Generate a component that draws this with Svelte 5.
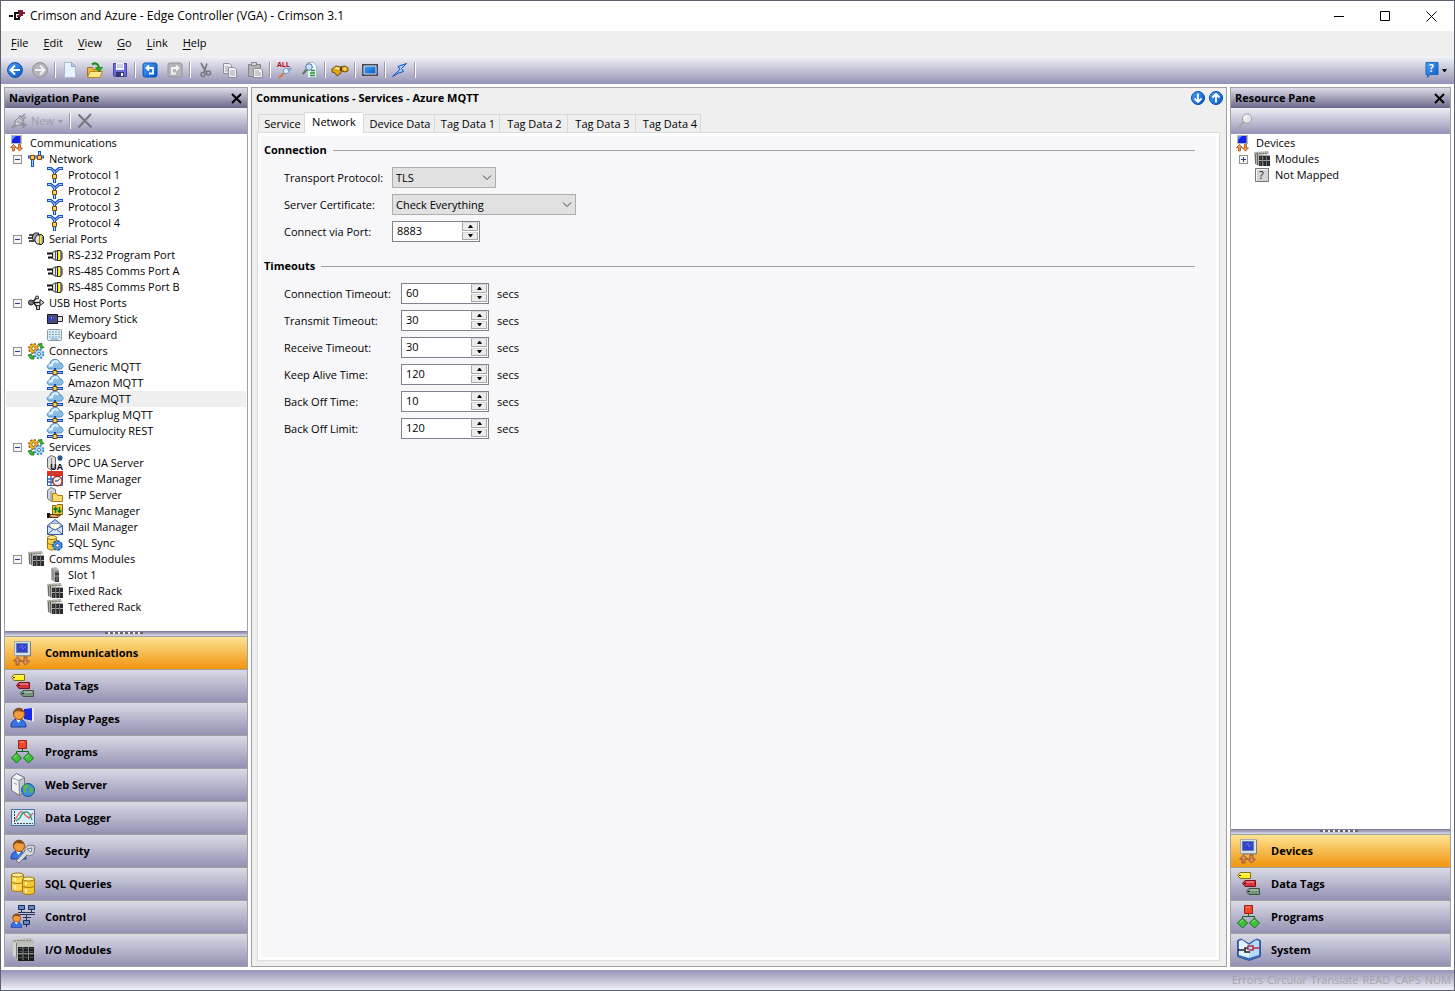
<script lang="ts">
  const menus = ["File", "Edit", "View", "Go", "Link", "Help"];

  // null draws a separator
  const tools = [
    ["back", "Back"], ["forward", "Forward"], null,
    ["new", "New"], ["open", "Open"], ["save", "Save"], null,
    ["undo", "Undo"], ["redo", "Redo"], null,
    ["cut", "Cut"], ["copy", "Copy"], ["paste", "Paste"], null,
    ["findall", "Find All"], ["find", "Find"], null,
    ["binoculars", "Search"], null,
    ["screen", "Screen"], null,
    ["bolt", "Download"], null,
  ];

  let navTree = $state([
    { label: "Network", icon: "network", open: true, items: [
      { label: "Protocol 1", icon: "protocol" },
      { label: "Protocol 2", icon: "protocol" },
      { label: "Protocol 3", icon: "protocol" },
      { label: "Protocol 4", icon: "protocol" },
    ] },
    { label: "Serial Ports", icon: "serials", open: true, items: [
      { label: "RS-232 Program Port", icon: "serial" },
      { label: "RS-485 Comms Port A", icon: "serial" },
      { label: "RS-485 Comms Port B", icon: "serial" },
    ] },
    { label: "USB Host Ports", icon: "usb", open: true, items: [
      { label: "Memory Stick", icon: "stick" },
      { label: "Keyboard", icon: "keyboard" },
    ] },
    { label: "Connectors", icon: "gears", open: true, items: [
      { label: "Generic MQTT", icon: "cloud" },
      { label: "Amazon MQTT", icon: "cloud" },
      { label: "Azure MQTT", icon: "cloud" },
      { label: "Sparkplug MQTT", icon: "cloud" },
      { label: "Cumulocity REST", icon: "cloud" },
    ] },
    { label: "Services", icon: "gears", open: true, items: [
      { label: "OPC UA Server", icon: "opc" },
      { label: "Time Manager", icon: "time" },
      { label: "FTP Server", icon: "ftp" },
      { label: "Sync Manager", icon: "sync" },
      { label: "Mail Manager", icon: "mail" },
      { label: "SQL Sync", icon: "sqlsync" },
    ] },
    { label: "Comms Modules", icon: "rack", open: true, items: [
      { label: "Slot 1", icon: "slot" },
      { label: "Fixed Rack", icon: "rack" },
      { label: "Tethered Rack", icon: "rack" },
    ] },
  ]);

  let resourceTree = $state([
    { label: "Modules", icon: "rack", open: false, items: [] },
    { label: "Not Mapped", icon: "unmapped" },
  ]);

  const navSections = [
    ["comms", "Communications"], ["tags", "Data Tags"], ["display", "Display Pages"],
    ["programs", "Programs"], ["web", "Web Server"], ["logger", "Data Logger"],
    ["security", "Security"], ["sql", "SQL Queries"], ["control", "Control"], ["io", "I/O Modules"],
  ];
  const resourceSections = [
    ["comms", "Devices"], ["tags", "Data Tags"], ["programs", "Programs"], ["system", "System"],
  ];

  const tabs = ["Service", "Network", "Device Data", "Tag Data 1", "Tag Data 2", "Tag Data 3", "Tag Data 4"];

  let timeouts = $state([
    { id: "connection", label: "Connection Timeout:", value: 60 },
    { id: "transmit", label: "Transmit Timeout:", value: 30 },
    { id: "receive", label: "Receive Timeout:", value: 30 },
    { id: "keepalive", label: "Keep Alive Time:", value: 120 },
    { id: "backoff", label: "Back Off Time:", value: 10 },
    { id: "backofflimit", label: "Back Off Limit:", value: 120 },
  ]);

  const flags = ["Errors", "Circular", "Translate", "READ", "CAPS", "NUM"];

  let selected = $state("Azure MQTT");
  let tab = $state("Network");
  let navSection = $state("Communications");
  let resourceSection = $state("Devices");
  let port = $state({ id: "port", value: 8883 });

  /* 16px artwork */
  const small: Record<string, string> = {
    app: `<path d="M0 8h4M10 5H6v6h4V9" stroke="#111" stroke-width="2" fill="none"/><path d="M8 8h3V4M9 3h4v5M12 5h4" stroke="#7c1c36" stroke-width="2" fill="none"/>`,
    back: `<circle cx="8" cy="8" r="7.4" fill="url(#blue)" stroke="#0b4da8"/><path d="M13 8H4M8 3.5 3.6 8 8 12.5" stroke="#fff" stroke-width="2" fill="none"/>`,
    forward: `<circle cx="8" cy="8" r="7.4" fill="#b5b5ba" stroke="#8e8e92"/><path d="M3 8h9M8 3.5 12.4 8 8 12.5" stroke="#f1f1f3" stroke-width="2" fill="none"/>`,
    new: `<path d="M2.5.5h7l4 4v11h-11z" fill="#e9f3fd" stroke="#a9bbd3"/><path d="M9.5.5v4h4z" fill="#b9d2ef" stroke="#8fa9cc"/>`,
    open: `<path d="M.5 14.5v-9h5l1 2h7v2" fill="#e9b93f" stroke="#a8771b"/><path d="M.5 15.5 3 9.5h12.500l-2.500 6z" fill="#ffe58c" stroke="#b7861f"/><path d="M5 2.500c4-2.500 7 0 7 4" stroke="#159015" stroke-width="2.2" fill="none"/><path d="M8.500 5.500h7L12 10z" fill="#26b226" stroke="#107010" stroke-width=".6"/>`,
    save: `<path d="M1.5 1.5h13v13h-12l-1-1z" fill="#6c6cd8" stroke="#4444a4"/><path d="M4 1h8v7H4z" fill="#f4f4ff"/><path d="M5 3h6M5 5h6" stroke="#a8a8c8"/><path d="M4 10h8v5H4z" fill="#35357c"/><path d="M9 11h2v3H9z" fill="#fff"/>`,
    undo: `<rect x="1" y="1" width="14" height="14" rx="2" fill="url(#blue)" stroke="#0b55bd"/><path d="M5 6h6v5.500H7M7 3.5 4.500 6 7 8.500" stroke="#fff" stroke-width="1.8" fill="none"/>`,
    redo: `<rect x="1" y="1" width="14" height="14" rx="2" fill="#b4b4b8" stroke="#949498"/><path d="M11 6H5v5.500h4M9 3.5 11.500 6 9 8.500" stroke="#f3f3f5" stroke-width="1.8" fill="none"/>`,
    cut: `<path d="M4 1l5 9M10 1.5 7 10" stroke="#77777f" stroke-width="1.6"/><circle cx="6" cy="12.500" r="2" fill="none" stroke="#77777f" stroke-width="1.5"/><circle cx="11.500" cy="11" r="2" fill="none" stroke="#77777f" stroke-width="1.5"/>`,
    copy: `<path d="M1.5 1.5h6l2 2v8h-8z" fill="#ececf0" stroke="#8f8f96"/><path d="M3 5h4M3 7h4M3 9h4" stroke="#a4a4aa"/><path d="M6.5 5.5h6l2 2v8h-8z" fill="#f2f2f5" stroke="#8f8f96"/><path d="M8 9h5M8 11h5M8 13h5" stroke="#a4a4aa"/>`,
    paste: `<path d="M1.5 2.5h12v12h-12z" fill="#b3b3b7" stroke="#85858b"/><path d="M4.5.5h5v3h-5z" fill="#d7d7da" stroke="#85858b"/><path d="M6.5 6.5h7l2 2v7h-9z" fill="#f1f1f4" stroke="#8f8f96"/><path d="M8 9h4M8 11h6M8 13h6" stroke="#a4a4aa"/>`,
    findall: `<text x="0" y="5" font-size="7" font-weight="700" fill="#b00d1b">ALL</text><path d="m7 11-5 5" stroke="#d17a32" stroke-width="2"/><circle cx="9" cy="9" r="2.700" fill="#dbeeff" stroke="#6f9fce"/><path d="M13 5v4M11 7h4" stroke="#6f9fce"/>`,
    find: `<path d="M5.5.5h6l3 3v12h-9z" fill="#f1f7ff" stroke="#a9b9ca"/><path d="M9 8.500h4M8 11h5M8 13.500h5" stroke="#159b22" stroke-width="1.5"/><path d="M5 7 .8 12" stroke="#4b7e4d" stroke-width="2"/><circle cx="7" cy="5" r="3.300" fill="#c7e3fb" stroke="#4e77a7"/>`,
    binoculars: `<path d="m0 7 4-3 4 1 5-1 3 2v3l-3 1-3-1-2 3-3 2-2-3-3-1z" fill="#dba21a" stroke="#76500d"/><path d="m2 6 3-1 3 1-2 2z" fill="#ffe47e"/><path d="M8 5h2v4H8z" fill="#5b4312"/><circle cx="13" cy="7" r="1.700" fill="#ffd557"/>`,
    screen: `<path d="M0 2h16v12H0z" fill="#4b4b50"/><path d="M2 4h12v8H2z" fill="url(#blue)" stroke="#d4dff2"/>`,
    bolt: `<path d="M14.5 1.5 6 4.500l2 3-7.500 7 6-3.500 5-1.500-2-3z" fill="#a9d4ff" stroke="#0b4fc0"/>`,
    help: `<path d="M2 .5h12v12H6l-2.500 3v-3H2z" fill="url(#blue)" stroke="#2067b5"/><text x="5" y="10" font-size="10" font-weight="700" fill="#fff">?</text>`,
    down: `<circle cx="8" cy="8" r="6.500" fill="url(#blue)" stroke="#0947a8"/><path d="M8 3.500V12M4.500 8.500 8 12l3.500-3.500" stroke="#fff" stroke-width="1.8" fill="none"/>`,
    up: `<circle cx="8" cy="8" r="6.500" fill="url(#blue)" stroke="#0947a8"/><path d="M8 12.500V4M4.500 7.500 8 4l3.500 3.500" stroke="#fff" stroke-width="1.8" fill="none"/>`,
    plug: `<path d="m1 15 4-4" stroke="#8e8e97" stroke-width="2"/><path d="m3 9 3-1 3-5 2 1 3-3M12 6l3-2" stroke="#8e8e97" stroke-width="1.5" fill="none"/><path d="m4 8 5-5 4 4-4 5-5 1z" fill="#c9c9cf" stroke="#8e8e97"/><path d="m6 8 4 2M8 5l4 3" stroke="#8e8e97"/><path d="M12.500 9v6M9.500 12h6" stroke="#8e8e97" stroke-width="2"/>`,
    remove: `<path d="m1.500 1.500 13 13M14 1 1.500 14.500" stroke="#77777f" stroke-width="2"/>`,
    lens: `<path d="M7 9 1 15.500" stroke="#a6a6a6" stroke-width="2.2"/><circle cx="10" cy="5.500" r="4.700" fill="#e6e6e8" stroke="#a2a2a2"/><path d="M7.500 6a3 3 0 0 1 3-3" stroke="#fff" fill="none"/>`,
    comms: `<path d="M2 0h11v9H2z" fill="#b6bac3"/><path d="M3 1h8v7H3z" fill="#1522e0"/><path d="M3 1h4L3 5z" fill="#6c93ff"/><path d="M11.500 1v8" stroke="#777c88"/><path d="m4.500 9.500 3 3h-2V16h-2v-3.500h-2zM9.500 9.500h2V13h2l-3 3-3-3h2z" fill="#efa055" stroke="#a14e12" stroke-width=".8"/>`,
    network: `<path d="M0 6h16" stroke="#1653c2" stroke-width="3"/><path d="M1 6h14" stroke="#a9ccfa"/><path d="M4.500 6v10M11.500 0v6" stroke="#1653c2" stroke-width="3"/><path d="M4.500 9v6M11.500 1v3" stroke="#a9ccfa"/><path d="M2.5 4.500h4v4h-4zM9.500 4.500h4v4h-4z" fill="#ffc64a" stroke="#7c4a08"/>`,
    protocol: `<path d="M0 1.500h4L8 5l4-3.500h4" stroke="#1653c2" stroke-width="3" fill="none"/><path d="M1 1.500h3L8 5.500l4-4h3" stroke="#b7d8ff" fill="none"/><path d="M7.500 5v11" stroke="#1653c2" stroke-width="3"/><path d="M7.500 5v10.500" stroke="#b7d8ff"/><path d="M5.500 7.500h4v4h-4z" fill="#ffd06a" stroke="#7c4a08"/>`,
    serials: `<path d="M1 4h5M0 7h5M1 10h5" stroke="#111" stroke-width="1.6"/><path d="m4.500 5 2-3h4v9h-3l-3-3z" fill="#a9a9a9" stroke="#222"/><path d="m7 7 2-3h4v9H9l-2-3z" fill="#e2e2e2" stroke="#222"/><path d="M11.500 3.500h2l2 2v6l-2 2h-2z" fill="#8f8f96" stroke="#222"/><path d="M12.500 4.500v8" stroke="#ffee2a" stroke-width="2"/>`,
    serial: `<path d="M0 6.500h6M1 10.500h5" stroke="#111" stroke-width="2"/><path d="m5.500 6 2-2h3v9h-3l-2-2z" fill="#e2e2e2" stroke="#222"/><path d="M8.500 4v9" stroke="#555"/><path d="M10.500 3.500h3l1.500 2v6l-1.500 2h-3z" fill="#8f8f96" stroke="#222"/><path d="M12 4v9" stroke="#ffee2a" stroke-width="2"/>`,
    usb: `<path d="M3 7.500h10M5 7l3-4h3M6 8l3 4" stroke="#222" stroke-width="1.5" fill="none"/><circle cx="3" cy="7.500" r="2.500" fill="#777" stroke="#222"/><path d="m12 4.500 4 3-4 3z" fill="#ddd" stroke="#222"/><circle cx="9" cy="2.500" r="1.500" fill="#ccc" stroke="#222"/><path d="M8.500 10.500h3v4h-3z" fill="#ccc" stroke="#222"/>`,
    stick: `<path d="M.5 3.500h10v9H.5z" fill="#4c4c78" stroke="#15152c"/><circle cx="4" cy="8" r="2" fill="#1f36ff"/><path d="M4 7h1" stroke="#fff"/><path d="M10.500 5.500h5v5h-5z" fill="#e6e6e6" stroke="#222"/>`,
    keyboard: `<rect x=".5" y="2.500" width="14" height="11" rx="1" fill="#dfeaf1" stroke="#8d9aa4"/><path d="M2 5h11M2 7.500h11M2 10h11" stroke="#6aa4c7" stroke-dasharray="2 1"/><path d="M4 12h7" stroke="#6aa4c7"/>`,
    gears: `<circle cx="5.500" cy="5.500" r="4.500" fill="#e0a11c" stroke="#946208" stroke-width="2" stroke-dasharray="2 1.500"/><circle cx="5.500" cy="5.500" r="4" fill="#f0b62c"/><circle cx="5.500" cy="5.500" r="1.700" fill="#fff" stroke="#946208"/><circle cx="11" cy="11" r="4.200" fill="#9dd0f8" stroke="#3a7fc4" stroke-width="2" stroke-dasharray="2 1.300"/><circle cx="11" cy="11" r="3.600" fill="#acd9fb"/><circle cx="11" cy="11" r="1.500" fill="#fff" stroke="#3a7fc4"/><path d="m10 1 4-.5v2l2 2-3 1-1-2zM0 12l3-1 1 2h2v3H3z" fill="#46b839" stroke="#106b13" stroke-width=".8"/>`,
    cloud: `<path d="M2 10C-1 9 0 5 3 5c0-6 9-6 10-1 3.500 0 4 5 1 6z" fill="#86bce6" stroke="#5490c4"/><path d="M2 7c1-1 2-1 3-1 0-4 5-5 6-2" stroke="#d9eefd" stroke-width="2.5" fill="none"/><path d="M8 9v4" stroke="#234e8d" stroke-width="2"/><path d="M0 13.500h16" stroke="#174ba3" stroke-width="3"/><path d="M1 13.500h14" stroke="#8fbcf3"/><path d="M6 11.500h4v4H6z" fill="#ffd363" stroke="#6e4208"/>`,
    opc: `<path d="M.5 3 4.500.5l4 2v9l-4 4-4-3z" fill="#dcdcdc" stroke="#666"/><path d="M4.500 3v11" stroke="#888"/><path d="M13 0v6M10 3h6M11 1l4 4M15 1l-4 4" stroke="#184f8f" stroke-width="1.2"/><text x="3" y="15" font-size="9" font-weight="700" fill="#111">UA</text>`,
    time: `<path d="M.5 1.500h15v13H.5z" fill="#fff" stroke="#2759ad"/><path d="M0 0h16v5H0z" fill="#d73526"/><path d="M4 5v10M8 5v10M12 5v10M0 8h16M0 11h16" stroke="#2f63c4" stroke-width="1.3"/><circle cx="10.500" cy="10" r="4.700" fill="#f6f0ed" stroke="#a32b20" stroke-width="1.5"/><path d="M13 7.500 10.500 10H8" stroke="#222" fill="none"/>`,
    ftp: `<path d="M.5 3.500 4 .5l4.500 2v9l-4 3-4-3z" fill="#d4d7da" stroke="#6d737a"/><path d="M4 4v10" stroke="#8d9399"/><path d="M5.500 14.500v-8h4l1 2h5v6z" fill="#ffd967" stroke="#a9760e"/>`,
    sync: `<path d="M5.500 11.500v-9h4l1-1h5v10z" fill="#f6ca3e" stroke="#8b650b"/><path d="M8.500 10V4.500M6.500 6.500l2-2 2 2M12.500 4v5.500M10.500 7.500l2 2 2-2" stroke="#087c13" stroke-width="1.5" fill="none"/><path d="M0 10h3v5H0z" fill="#111"/><path d="M3 11.500h5l2 1 4-1-3 3H3z" fill="#e5ad6b" stroke="#5e3509"/>`,
    mail: `<path d="M.5 6.500 8 .5l7.500 6v9H.5z" fill="#b5cdf2" stroke="#365a9a"/><path d="M3 4.500h10v5l-5 3-5-3z" fill="#fffbe6" stroke="#8aa0c0"/><path d="m.5 7 7.500 4 7.500-4v8.500H.5z" fill="#d4e5fc" stroke="#365a9a"/><path d="m1 15 5-4.500M15 15l-5-4.500" stroke="#365a9a"/>`,
    sqlsync: `<path d="M.5 2.500v11c2 2 7 2 9 0v-11z" fill="#f6cf45" stroke="#9a6c09"/><ellipse cx="5" cy="2.500" rx="4.500" ry="2" fill="#fff09c" stroke="#9a6c09"/><path d="M.5 8c2 2 7 2 9 0" stroke="#9a6c09" fill="none"/><circle cx="10.500" cy="10.500" r="4.500" fill="#5d9ee0" stroke="#1654a3" stroke-width="1.5" stroke-dasharray="3 1"/><circle cx="10.500" cy="10.500" r="1.800" fill="#fff" stroke="#1654a3"/>`,
    rack: `<path d="m0 1 14-1 1 3-10 1v11l-4-2z" fill="#b3b3ae"/><path d="M1.500 3v10M3.500 3v11" stroke="#696966"/><path d="M2 2.500h12" stroke="#7b7b78" stroke-dasharray="2 1"/><path d="M5 4h11v11H5z" fill="#2b2b2d"/><path d="M5 4.500h11M5 9.500h11" stroke="#a8a8a5"/><path d="M6 7h9M6 12h9M6 14h9" stroke="#72726f" stroke-dasharray="1 2"/><path d="M8.500 4v11M12.500 4v11" stroke="#77777a"/>`,
    slot: `<path d="m4 1 5-1 3 3v12H8l-4-2z" fill="#b3b3ae"/><path d="M6 2v11" stroke="#777"/><path d="M8 4h4v11H8z" fill="#363638"/><path d="M8 5h4M8 9h4" stroke="#bbb"/><path d="M10 10v4" stroke="#8c8c88"/>`,
    unmapped: `<path d="M1.500 1.500h13v13h-13z" fill="#d4d4d4" stroke="#777"/><path d="M2.500 13.500v-11h11" stroke="#f7f7f7" fill="none"/><text x="5" y="12" font-size="11" fill="#111">?</text>`,
  };

  const person = `<path d="M0 20c0-5 2-8 7-8s8 3 8 8z" fill="#3b73e6" stroke="#173f9e"/><path d="m5 12 2.500 4L10 12z" fill="#fff"/><circle cx="8" cy="7" r="5.500" fill="#f49b3a" stroke="#9a4d0b"/><path d="M2 8C1 0 12-2 13 5 9 5 6 3 4 5z" fill="#85501c"/>`;

  /* 24px artwork */
  const large: Record<string, string> = {
    comms: `<path d="M3.500.5h16v14h-16z" fill="#dbe0e5" stroke="#a6aab2"/><path d="M5.500 2.500h11v9h-11z" fill="#3440ce" stroke="#5e83a1"/><path d="m8 7 3-3 1 4 3-3" stroke="#5a74f0" fill="none"/><path d="M19.500 1v14H5" stroke="#777b88" fill="none"/><path d="m6.500 16 4 4h-2.500v4H5v-4H2.500zM13 16h3v4h2.500l-4 4-4-4H13z" fill="#d58a5a" stroke="#8d4d27" stroke-width=".8"/>`,
    tags: `<path d="M3 .5h10.500v6H3l-2.500-3z" fill="#ffed25" stroke="#82700b"/><path d="M8 8.500h10.500v6H8l-2.500-3z" fill="#d5303b" stroke="#73131b"/><path d="M12 16.500h10.500v6H12l-2.500-3z" fill="#77947f" stroke="#3f5346"/><path d="M4 2h8M9 10h8M13 18h8" stroke="#fff" opacity=".6"/><path d="M2 3.500h2M7 11.500h2M11 19.500h2" stroke="#222"/>`,
    display: `<path d="m12.500 1.500 10-1v14l-10-2z" fill="#1b29e9" stroke="#d5d8e8"/><path d="M22 1v13" stroke="#eee" stroke-width="2"/>${person}`,
    programs: `<path d="M11.500 8v4M5.500 15v-3.500h12V15" stroke="#17651b" fill="none"/><path d="M7.500.5h8v8h-8z" fill="#f14829" stroke="#9f1f12"/><path d="M9 2h4" stroke="#ff9f86"/><path d="m5.500 13 5 5-5 5-5-5zM17.500 13l5 5-5 5-5-5z" fill="#3fc33b" stroke="#176d18"/><path d="m3 17.500 2.500-2.500M15 17.500l2.500-2.500" stroke="#a6f29b"/>`,
    web: `<path d="M.5 4.500 5.500.5l8 4v14l-5 4-8-5z" fill="#f0f1f3" stroke="#666c75"/><path d="M8 7.500 13.500 4.500v14l-5 4z" fill="#c4c8cf" stroke="#777d86"/><path d="m.5 4.500 8 3.500M3 10l3 1.500" stroke="#9aa0a8"/><circle cx="17" cy="17" r="6.500" fill="#3c8cd9" stroke="#17539a"/><path d="M12 13c3-3 6-2 6 1l-3 2 1 4-3-1zM19 14l4 2-2 5-3-3z" fill="#58b54a"/>`,
    logger: `<path d="M.5 3.500h23v16H.5z" fill="#d8edfb" stroke="#4a70a9"/><path d="M3.500 5v12.500H22" stroke="#444" fill="none" stroke-dasharray="2 1"/><path d="m4 14 5-8c2-1 4 0 5 3l4 3 4-5" stroke="#e2605f" stroke-width="1.3" fill="none"/><path d="m5 15 4-3c2-7 8-8 10-3l2 5" stroke="#2d9c68" stroke-width="1.3" fill="none"/>`,
    security: `${person}<path d="m5 22 9-10c-1-5 5-7 10-5l-1 7c-2 3-5 3-7 2l-8 8z" fill="#d4d7dc" stroke="#74777d"/><path d="m16 10 5-1-1 4z" fill="#f7f7f7" stroke="#74777d"/>`,
    sql: `<path d="M.5 3v15c2 2 10 2 12 0V3z" fill="#ffd850" stroke="#9d730b"/><ellipse cx="6.500" cy="3" rx="6" ry="2" fill="#fff09c" stroke="#9d730b"/><path d="M.5 10c2 2 10 2 12 0" stroke="#9d730b" fill="none"/><path d="M11.500 7v14c2 2 10 2 12 0V7z" fill="#f4c630" stroke="#9d730b"/><ellipse cx="17.500" cy="7" rx="6" ry="2" fill="#fff09c" stroke="#9d730b"/><path d="M11.500 14c2 2 10 2 12 0" stroke="#9d730b" fill="none"/><path d="M4 6v3M4 13v4M15 10v3M15 17v4" stroke="#fff3b2" stroke-width="2"/>`,
    control: `<path d="M7.500.5h6v4h-6zM17.500.5h6v4h-6z" fill="#6289c7" stroke="#1b2c50"/><path d="M10.500 5v3M20.500 5v3M7 7.500h17M7 9.500h17M15.500 10v12M12 12.500h8" stroke="#263560" fill="none"/><path d="M12.500 15.500h6v4h-6z" fill="#6289c7" stroke="#1b2c50"/><g transform="translate(0 8) scale(.72)">${person}</g>`,
    io: `<path d="m1 2 18-2 4 3v19H7l-5-3z" fill="#b9bab3"/><path d="M2 5h3v13H2z" fill="#d4d5d0"/><path d="M5.500 5v15" stroke="#777973"/><path d="M3 2.500h18" stroke="#898b85" stroke-dasharray="2 1"/><path d="M7 5h16v5H7z" fill="#bfc1bb"/><path d="M7 9h16v14H7z" fill="#1b1c1d"/><path d="M7 15.500h16" stroke="#868883"/><path d="M12 9v13M17.500 9v13" stroke="#868883"/><path d="M9.500 10v12M15 10v12M20.500 10v12" stroke="#4a5056" stroke-dasharray="1 2" stroke-width="3"/>`,
    system: `<path d="M.5 2.500 4 1l5 3 3 2 4-3 4-2 3.500 1.500v16L12 22.500.5 18.500z" fill="#3d6fbb" stroke="#2f589d"/><path d="m2 3 3-1 7 5v13l-10-3z" fill="#e1f3ff"/><path d="m22 3-3-1-7 5v13l10-3z" fill="#b7dbfb"/><path d="M1 12h6M13 14H8v-4h3" stroke="#222" stroke-width="1.6" fill="none"/><path d="M11 12V8h5v4h-4M16 10h7" stroke="#b32d48" stroke-width="1.6" fill="none"/>`,
  };
</script>

{#snippet icon(name)}
  <svg class="icon" viewBox="0 0 16 16" aria-hidden="true">{@html small[name]}</svg>
{/snippet}

{#snippet treeView(root, groups)}
  <ul class="tree">
    <li>
      <div class="node root">{@render icon("comms")}<button class="name">{root}</button></div>
      <ul>
        {#each groups as group}
          <li>
            <div class="node" class:branch={group.items}>
              {#if group.items}
                <button class="toggle" aria-label="Toggle {group.label}" onclick={() => (group.open = !group.open)}>
                  <svg viewBox="0 0 7 7">
                    <path d={group.open ? "M1 3.5h5" : "M1 3.5h5M3.5 1v5"} stroke="#2b3f8c" />
                  </svg>
                </button>
              {/if}
              {@render icon(group.icon)}
              <button class="name">{group.label}</button>
            </div>
            {#if group.open}
              <ul>
                {#each group.items as item}
                  <li>
                    <div class="node leaf" class:selected={selected === item.label}>
                      {@render icon(item.icon)}
                      <button class="name" onclick={() => (selected = item.label)}>{item.label}</button>
                    </div>
                  </li>
                {/each}
              </ul>
            {/if}
          </li>
        {/each}
      </ul>
    </li>
  </ul>
{/snippet}

{#snippet sections(list, current, pick)}
  <div class="splitter"><span></span></div>
  <nav>
    {#each list as [art, label]}
      <button class="section" class:active={current === label} onclick={() => pick(label)}>
        <svg class="art" viewBox="0 0 24 24" aria-hidden="true">{@html large[art]}</svg>
        {label}
      </button>
    {/each}
  </nav>
{/snippet}

{#snippet spinner(field)}
  <div class="spinner">
    <input id={field.id} type="text" inputmode="numeric" bind:value={field.value}>
    <div class="arrows">
      <button aria-label="Increase" onclick={() => field.value++}>
        <svg viewBox="0 0 5 3"><path d="M0 3h5L3 0H2z" /></svg>
      </button>
      <button aria-label="Decrease" onclick={() => field.value--}>
        <svg viewBox="0 0 5 3"><path d="M0 0h5L3 3H2z" /></svg>
      </button>
    </div>
  </div>
{/snippet}

{#snippet chevron()}
  <svg class="chevron" viewBox="0 0 10 6" aria-hidden="true"><path d="m1 .5 4 4 4-4" fill="none" stroke="#444" /></svg>
{/snippet}

<svg class="defs" aria-hidden="true">
  <defs>
    <linearGradient id="blue" x1="0" y1="0" x2="1" y2="1">
      <stop offset="0" stop-color="#4ba3f5" />
      <stop offset="1" stop-color="#0755c8" />
    </linearGradient>
  </defs>
</svg>

<div class="window">
  <header class="titlebar">
    {@render icon("app")}
    <h1>Crimson and Azure - Edge Controller (VGA) - Crimson 3.1</h1>
    <button aria-label="Minimize"><svg viewBox="0 0 11 11"><path d="M0 5.5h10" /></svg></button>
    <button aria-label="Maximize"><svg viewBox="0 0 11 11"><path d="M.5.5h9v9h-9z" /></svg></button>
    <button aria-label="Close"><svg viewBox="0 0 11 11"><path d="m.5.5 10 10M10.5.5l-10 10" /></svg></button>
  </header>

  <div class="menubar">
    {#each menus as menu}
      <button><u>{menu[0]}</u>{menu.slice(1)}</button>
    {/each}
  </div>

  <div class="toolbar">
    {#each tools as tool}
      {#if tool}
        <button class="tool" aria-label={tool[1]}>{@render icon(tool[0])}</button>
      {:else}
        <i class="sep"></i>
      {/if}
    {/each}
    <button class="tool help" aria-label="Help">
      {@render icon("help")}
      <svg class="caret" viewBox="0 0 5 3"><path d="M0 0h5L3 3H2z" /></svg>
    </button>
  </div>

  <div class="workspace">
    <aside class="pane nav-pane">
      <div class="pane-title">
        <h2>Navigation Pane</h2>
        <button aria-label="Close navigation pane"><svg viewBox="0 0 11 11"><path d="m1 1 9 9M10 1l-9 9" /></svg></button>
      </div>
      <div class="pane-tools">
        <button class="tool new" disabled>
          {@render icon("plug")} New
          <svg class="caret" viewBox="0 0 5 3"><path d="M0 0h5L3 3H2z" /></svg>
        </button>
        <i class="sep"></i>
        <button class="tool" aria-label="Delete" disabled>{@render icon("remove")}</button>
      </div>
      {@render treeView("Communications", navTree)}
      {@render sections(navSections, navSection, (s) => (navSection = s))}
    </aside>

    <main>
      <div class="heading">
        <h2>Communications - Services - Azure MQTT</h2>
        <button aria-label="Next item">{@render icon("down")}</button>
        <button aria-label="Previous item">{@render icon("up")}</button>
      </div>
      <div class="tabs" role="tablist">
        {#each tabs as t}
          <button role="tab" aria-selected={tab === t} class:current={tab === t} onclick={() => (tab = t)}>{t}</button>
        {/each}
      </div>
      <div class="page" role="tabpanel">
        <section>
          <h3>Connection</h3>
          <div class="fields">
            <label for="transport">Transport Protocol:</label>
            <div class="select">
              <select id="transport"><option>TLS</option></select>
              {@render chevron()}
            </div>
            <label for="certificate">Server Certificate:</label>
            <div class="select wide">
              <select id="certificate"><option>Check Everything</option></select>
              {@render chevron()}
            </div>
            <label for="port">Connect via Port:</label>
            {@render spinner(port)}
          </div>
        </section>
        <section>
          <h3>Timeouts</h3>
          <div class="fields timeouts">
            {#each timeouts as field}
              <label for={field.id}>{field.label}</label>
              <div class="measure">{@render spinner(field)}<span>secs</span></div>
            {/each}
          </div>
        </section>
      </div>
    </main>

    <aside class="pane resource-pane">
      <div class="pane-title">
        <h2>Resource Pane</h2>
        <button aria-label="Close resource pane"><svg viewBox="0 0 11 11"><path d="m1 1 9 9M10 1l-9 9" /></svg></button>
      </div>
      <div class="pane-tools">
        <button class="tool" aria-label="Search" disabled>{@render icon("lens")}</button>
      </div>
      {@render treeView("Devices", resourceTree)}
      {@render sections(resourceSections, resourceSection, (s) => (resourceSection = s))}
    </aside>
  </div>

  <footer>
    {#each flags as flag}<span>{flag}</span>{/each}
  </footer>
</div>

<style>
  :global(body) { background: #fff; }

  .window {
    box-sizing: border-box;
    min-height: 100vh;
    display: flex;
    flex-direction: column;
    border: 1px solid #5c636d;
    font: 11px/16px "Open Sans", "Noto Sans", sans-serif;
    color: #000;
  }
  .defs { position: absolute; width: 0; height: 0; }

  h1, h2, h3 { margin: 0; font-size: 11px; font-weight: 700; }
  ul { list-style: none; margin: 0; padding: 0; }
  button {
    margin: 0;
    padding: 0;
    border: none;
    background: none;
    font: inherit;
    color: inherit;
  }
  svg { display: block; flex: none; overflow: visible; }
  .icon { width: 16px; height: 16px; }
  .art { width: 24px; height: 24px; }
  .caret { width: 5px; height: 3px; }

  /* Title and menu */
  .titlebar { display: flex; align-items: center; height: 30px; padding-left: 8px; }
  .titlebar h1 { flex: 1; margin-left: 5px; font-size: 12px; font-weight: 400; white-space: nowrap; }
  .titlebar button { display: flex; justify-content: center; width: 46px; }
  .titlebar button svg { width: 11px; height: 11px; fill: none; stroke: #000; }

  .menubar { display: flex; gap: 15px; height: 25px; padding-left: 10px; background: #efefef; }
  .menubar button { padding-bottom: 2px; }
  .menubar u { text-underline-offset: 2px; }

  .toolbar {
    display: flex;
    align-items: center;
    height: 28px;
    padding: 0 2px;
    background: linear-gradient(#f3f3f8, #9593b5);
  }
  .tool { padding: 4px 5px 4px 4px; }
  .help { display: flex; align-items: center; gap: 2px; margin-left: auto; }
  .sep {
    width: 1px;
    height: 16px;
    margin: 0 2px 0 1px;
    border-left: 1px solid #96969e;
    background: #fff;
  }

  /* Side panes */
  .workspace { flex: 1; display: flex; gap: 3px; padding: 3px; }
  .pane { display: flex; flex-direction: column; box-sizing: border-box; border: 1px solid #a0a0a0; }
  .nav-pane { width: 244px; }
  .resource-pane { width: 221px; }

  .pane-title {
    display: flex;
    align-items: center;
    justify-content: space-between;
    height: 20px;
    padding: 0 5px 0 4px;
    background: linear-gradient(#dcdbe8, #6c688b);
  }
  .pane-title svg { width: 11px; height: 11px; stroke: #000; stroke-width: 2; }
  .pane-tools {
    display: flex;
    align-items: center;
    height: 26px;
    padding-left: 2px;
    background: linear-gradient(#efeff6, #9593b5);
  }
  .new { display: flex; align-items: center; gap: 4px; color: #9b9ba6; }
  .new .caret { fill: #9b9ba6; }

  .tree { flex: 1; padding: 1px; background: #fff; }
  .node { display: flex; align-items: center; height: 16px; padding-left: 22px; }
  .node.root { padding-left: 3px; }
  .node.branch { padding-left: 7px; }
  .node.leaf { padding-left: 41px; }
  .node.selected { background: #efefef; }
  .name { margin-left: 5px; white-space: nowrap; }
  .toggle { margin-right: 6px; }
  .toggle svg { width: 7px; height: 7px; border: 1px solid #919191; background: #f6f6f6; }

  .splitter {
    display: flex;
    justify-content: center;
    height: 5px;
    background: linear-gradient(#77749a, #e0e0ec);
    border-bottom: 1px solid #a0a0a0;
  }
  .splitter span { width: 38px; height: 2px; margin: 1px 4px 0 0; background: repeating-linear-gradient(90deg, #66666e 0 3px, #eee 3px 5px); }

  .section {
    display: flex;
    align-items: center;
    gap: 10px;
    width: 100%;
    height: 33px;
    padding-left: 6px;
    border-bottom: 1px solid #a0a0a0;
    background: linear-gradient(#dadae6, #9391b3);
    font-weight: 700;
  }
  .section:last-child { height: 32px; border-bottom: none; }
  .section.active { background: linear-gradient(#fce392, #f1940f); }

  /* Editor */
  main {
    flex: 1;
    display: flex;
    flex-direction: column;
    padding: 0 6px 5px 5px;
    border: 1px solid #a0a0a0;
    background: #efefef;
  }
  .heading { display: flex; align-items: center; gap: 2px; height: 20px; margin: 0 -4px 0 -1px; }
  .heading h2 { flex: 1; }

  .tabs {
    display: grid;
    grid-template-columns: 46px 59px 71px 65px 68px 68px 66px;
    align-items: end;
    height: 24px;
    padding-left: 1px;
  }
  .tabs button {
    height: 18px;
    padding-left: 2px;
    border: 1px solid #d9d9d9;
    border-width: 1px 0 0 1px;
    white-space: nowrap;
  }
  .tabs button:last-child { padding-left: 4px; border-right-width: 1px; }
  .tabs button.current {
    height: 21px;
    margin-bottom: -1px;
    padding: 0 0 3px;
    background: #fff;
    z-index: 1;
  }
  .page {
    flex: 1;
    padding: 6px 20px 0 3px;
    border: 1px solid #dcdcdc;
    background: #f7f7fa;
    box-shadow: inset 0 0 0 3px #fff;
  }
  section { padding: 3px 4px 16px 3px; }
  section + section { padding-top: 0; }
  h3 { display: flex; align-items: center; gap: 6px; }
  h3::after { content: ""; flex: 1; height: 1px; background: #a0a0a0; }

  .fields {
    display: grid;
    grid-template-columns: 100px 1fr;
    column-gap: 8px;
    row-gap: 6px;
    align-items: center;
    margin: 9px 0 0 20px;
  }
  .timeouts { grid-template-columns: 109px 1fr; }
  label { white-space: nowrap; }

  .select { display: grid; align-items: center; width: 104px; }
  .select.wide { width: 184px; }
  select {
    grid-area: 1 / 1;
    appearance: none;
    box-sizing: border-box;
    height: 21px;
    padding: 0 20px 0 3px;
    border: 1px solid #adadad;
    border-radius: 0;
    background: #e1e1e1;
    font: inherit;
    color: #000;
  }
  .chevron { grid-area: 1 / 1; justify-self: end; width: 10px; height: 6px; margin-right: 4px; pointer-events: none; }

  .spinner {
    display: flex;
    box-sizing: border-box;
    width: 88px;
    height: 21px;
    padding-right: 1px;
    border: 1px solid #7f818c;
    background: #fff;
  }
  .spinner input {
    flex: 1;
    min-width: 0;
    padding: 0 0 2px 4px;
    border: none;
    outline: none;
    background: none;
    font: inherit;
  }
  .arrows { display: grid; width: 16px; padding-bottom: 1px; gap: 1px; }
  .arrows button {
    display: grid;
    place-items: center;
    border: 1px solid #a8a8a8;
    border-top-color: #d8d8d8;
    background: #ececec;
  }
  .arrows svg { width: 5px; height: 3px; }
  .measure { display: flex; align-items: center; gap: 8px; }

  footer {
    display: flex;
    justify-content: flex-end;
    align-items: center;
    gap: 4px;
    height: 20px;
    padding-right: 3px;
    background: linear-gradient(#9593b5, #f0f0f6);
    color: #a3a3a8;
  }
</style>
